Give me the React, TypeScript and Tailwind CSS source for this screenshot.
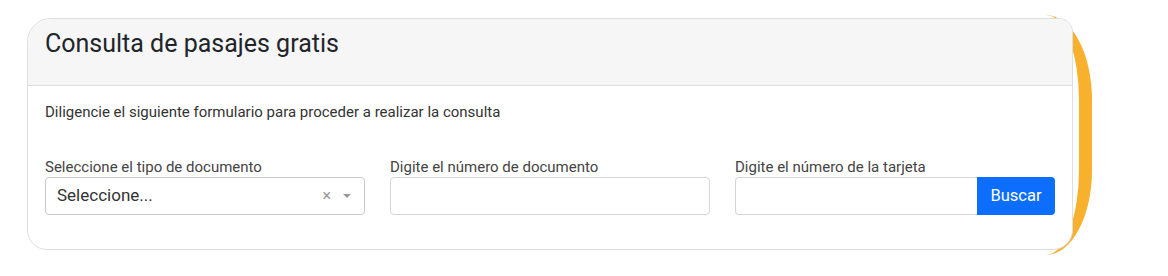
import React from "react";

export default function App() {
  return (
    <div className="w-[1168px] h-[276px] bg-white font-['Roboto',sans-serif] pt-[15px] pl-[27px]">
      <div className="w-[1065px] h-[240px] border-r-[13px] border-[#f8b12c] rounded-tr-[46px_85px] rounded-br-[46px_85px] pt-[3px] pr-[6px]">
        <div className="h-[232px] border border-[#dedede] rounded-tl-[24px] rounded-tr-[14px] rounded-b-[20px] flex flex-col overflow-hidden bg-white">
          <div className="bg-[#f6f6f6] border-b border-[#dcdcdc] h-[67px] px-[17px] pt-[10px]">
            <h1 className="text-[25px] leading-[30px] text-[#212529] font-normal">Consulta de pasajes gratis</h1>
          </div>
          <div className="px-[17px] pt-[17px]">
            <p className="text-[15px] leading-[18px] text-[#333]">
              Diligencie el siguiente formulario para proceder a realizar la consulta
            </p>
            <div className="grid grid-cols-3 gap-x-[25px] mt-[37px]">
              <div className="flex flex-col">
                <label className="text-[15px] leading-[18px] text-[#444] mb-[1px]">Seleccione el tipo de documento</label>
                <div className="h-[38px] border border-[#c9c9c9] rounded-[4px] flex items-center pl-[11px] pr-[12px]">
                  <span className="text-[17px] text-[#333] flex-1">Seleccione...</span>
                  <span className="text-[16px] text-[#999] mr-[11px] leading-none">×</span>
                  <svg width="10" height="6" viewBox="0 0 10 6"><path d="M1 1 L5 5 L9 1 Z" fill="#999" /></svg>
                </div>
              </div>
              <div className="flex flex-col">
                <label className="text-[15px] leading-[18px] text-[#444] mb-[1px]">Digite el número de documento</label>
                <input className="h-[38px] border border-[#d5d5d5] rounded-[4px] outline-none px-[12px]" />
              </div>
              <div className="flex flex-col">
                <label className="text-[15px] leading-[18px] text-[#444] mb-[1px]">Digite el número de la tarjeta</label>
                <div className="flex h-[38px]">
                  <input className="min-w-0 flex-1 border border-[#d5d5d5] border-r-0 rounded-l-[4px] outline-none px-[12px]" />
                  <button className="w-[78px] bg-[#0d6efd] text-white text-[16.5px] rounded-r-[4px]">Buscar</button>
                </div>
              </div>
            </div>
          </div>
        </div>
      </div>
    </div>
  );
}
